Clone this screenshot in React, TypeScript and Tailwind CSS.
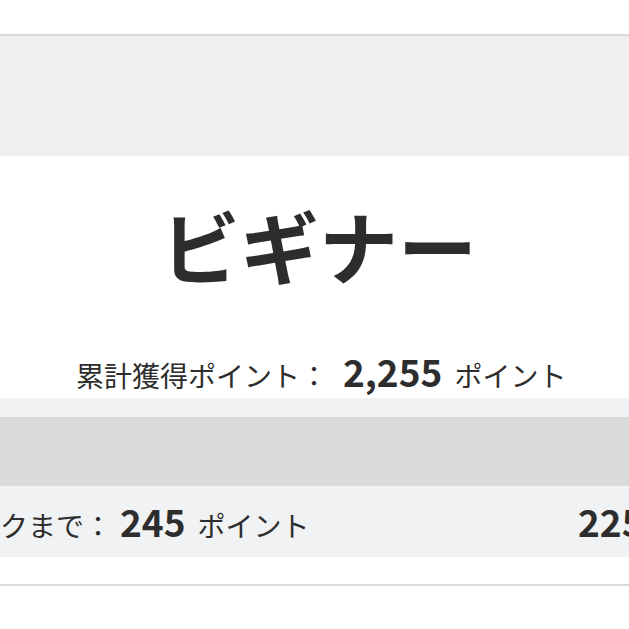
import React from "react";

export default function App() {
  const font = { fontFamily: '"Noto Sans CJK JP", "Noto Sans", sans-serif' };
  return (
    <div className="w-full overflow-hidden bg-white text-[#2d2d2d]" style={font}>
      <div className="h-[34px] bg-white" />
      <div className="h-[122px] border-t-2 border-[#dadada] bg-[#f0efee]" />
      <div className="flex h-[242px] flex-col">
        <div className="flex h-[188px] items-center justify-center pb-[12px] pl-[9px]">
          <span className="text-[79px] font-bold leading-none">ビギナー</span>
        </div>
        <div className="flex h-[54px] items-center pl-[76px] pt-[1px]">
          <div className="flex items-baseline whitespace-nowrap leading-none">
            <span className="text-[28px]">累計獲得ポイント：</span>
            <span className="ml-[15px] text-[37px] font-bold">2,255</span>
            <span className="ml-[12px] text-[28px]">ポイント</span>
          </div>
        </div>
      </div>
      <div className="h-[19px] bg-[#f0f2f4]" />
      <div className="h-[69px] bg-[#dadada]" />
      <div className="flex h-[71px] items-center justify-between bg-[#f0f2f4] leading-none">
        <div className="ml-[-112px] flex items-baseline whitespace-nowrap">
          <span className="text-[28px]">次のランクまで：</span>
          <span className="ml-[8px] text-[37px] font-bold">245</span>
          <span className="ml-[12px] text-[28px]">ポイント</span>
        </div>
        <div className="w-[51px] overflow-hidden whitespace-nowrap">
          <span className="text-[37px] font-bold">2250</span>
        </div>
      </div>
      <div className="h-[27px] bg-white" />
      <div className="h-[45px] border-t-2 border-[#dadada] bg-white" />
    </div>
  );
}
